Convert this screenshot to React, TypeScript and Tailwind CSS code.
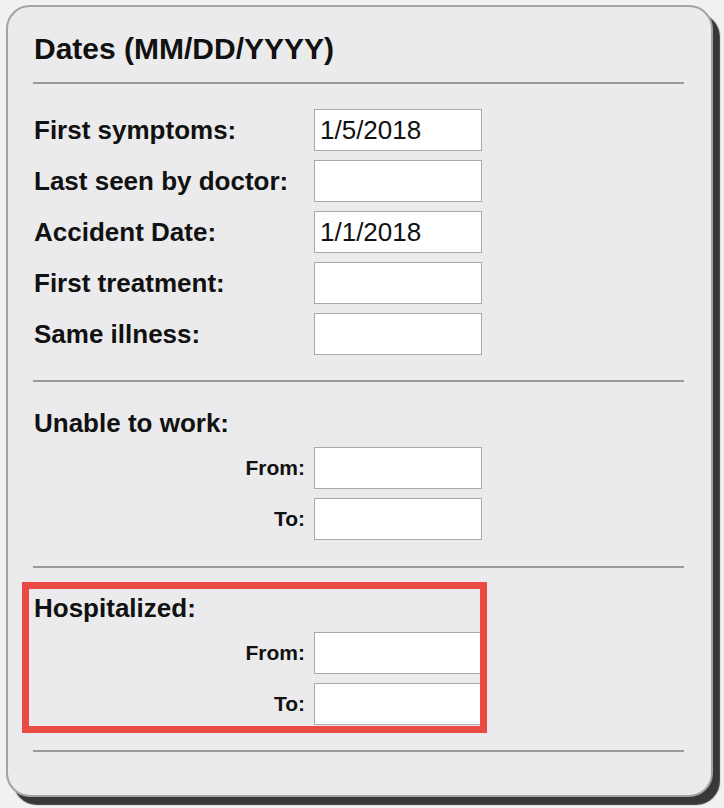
import React from 'react'

const font = { fontFamily: '"Liberation Sans", Arial, sans-serif' }

function DateInput({ value = '' }: { value?: string }) {
  return (
    <input
      type="text"
      defaultValue={value}
      className="w-[168px] h-[42px] border border-[#a9a9a9] bg-white pl-[5px] text-[26px] text-[#111] outline-none"
      style={font}
    />
  )
}

function Row({ label, value }: { label: string; value?: string }) {
  return (
    <div className="flex items-center h-[42px]">
      <div className="w-[281px] pl-px text-[26px] font-bold leading-[30px] text-[#111]">{label}</div>
      <DateInput value={value} />
    </div>
  )
}

function SubRow({ label }: { label: string }) {
  return (
    <div className="flex items-center h-[42px]">
      <div className="w-[281px] pr-[9px] text-right text-[21px] font-bold leading-[24px] text-[#111]">{label}</div>
      <DateInput />
    </div>
  )
}

function Divider({ className = '' }: { className?: string }) {
  return <div className={`h-[2px] bg-[#9b9b9b] ${className}`} />
}

export default function App() {
  return (
    <div className="min-h-screen w-[724px] h-[808px] bg-[#f1f1f1] pt-[5px] pl-[6px]" style={font}>
      <div className="w-[707px] h-[792px] rounded-[24px] border-2 border-[#a3a3a3] bg-[#ebebed] shadow-[7px_8px_1px_#383838] pl-[25px] pr-[27px]">
        <h1 className="mt-[25px] pl-px text-[30px] font-bold leading-[34px] text-[#111]">
          Dates (MM/DD/YYYY)
        </h1>
        <Divider className="mt-[16px]" />

        <div className="mt-[25px] flex flex-col gap-[9px]">
          <Row label="First symptoms:" value="1/5/2018" />
          <Row label="Last seen by doctor:" />
          <Row label="Accident Date:" value="1/1/2018" />
          <Row label="First treatment:" />
          <Row label="Same illness:" />
        </div>
        <Divider className="mt-[25px]" />

        <div className="mt-[26px] pl-px text-[26px] font-bold leading-[30px] text-[#111]">Unable to work:</div>
        <div className="mt-[9px] flex flex-col gap-[9px]">
          <SubRow label="From:" />
          <SubRow label="To:" />
        </div>
        <Divider className="mt-[26px]" />

        <div className="relative mt-[25px]">
          <div className="pl-px text-[26px] font-bold leading-[30px] text-[#111]">Hospitalized:</div>
          <div className="mt-[9px] flex flex-col gap-[9px]">
            <SubRow label="From:" />
            <SubRow label="To:" />
          </div>
          <div className="pointer-events-none absolute left-[-11px] top-[-11px] w-[465px] h-[151px] border-[7px] border-[#e94a42]" />
        </div>
        <Divider className="mt-[25px]" />
      </div>
    </div>
  )
}
